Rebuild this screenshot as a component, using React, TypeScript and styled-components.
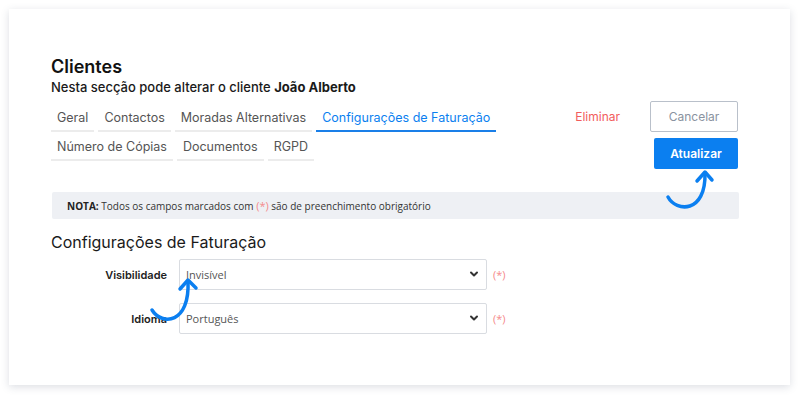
import styled, { createGlobalStyle } from 'styled-components';

const GlobalStyle = createGlobalStyle`
  html, body {
    margin: 0;
    padding: 0;
    background: #ffffff;
  }
  body {
    font-family: Inter, "Noto Sans", sans-serif;
  }
  * { box-sizing: border-box; }
`;

const blue = '#0b7ff0';

type Tab = { label: string; active?: boolean };

const rows: Tab[][] = [
    [{ label: 'Geral' }, { label: 'Contactos' }, { label: 'Moradas Alternativas' }, { label: 'Configurações de Faturação', active: true }],
    [{ label: 'Número de Cópias' }, { label: 'Documentos' }, { label: 'RGPD' }],
];

const fields = [
    { label: 'Visibilidade', value: 'Invisível' },
    { label: 'Idioma', value: 'Português' },
];

export default function App() {
    return (
        <>
            <GlobalStyle />
            <Page>
                <Card>
                    <Title>Clientes</Title>
                    <Subtitle>Nesta secção pode alterar o cliente <b>João Alberto</b></Subtitle>

                    <TopBar>
                        <Tabs>
                            {rows.map((row, i) => (
                                <TabRow key={i}>
                                    {row.map((t) => (
                                        <TabItem key={t.label} active={t.active}>{t.label}</TabItem>
                                    ))}
                                </TabRow>
                            ))}
                        </Tabs>
                        <Actions>
                            <ActionRow>
                                <DeleteLink>Eliminar</DeleteLink>
                                <CancelButton>Cancelar</CancelButton>
                            </ActionRow>
                            <UpdateButton>Atualizar</UpdateButton>
                        </Actions>
                    </TopBar>

                    <Note>
                        <b>NOTA:</b> Todos os campos marcados com <Req>(*)</Req> são de preenchimento obrigatório
                    </Note>

                    <SectionTitle>Configurações de Faturação</SectionTitle>

                    <Form>
                        {fields.map((f) => (
                            <FieldRow key={f.label}>
                                <Label>{f.label}</Label>
                                <SelectWrap>
                                    <Select defaultValue={f.value}>
                                        <option>{f.value}</option>
                                    </Select>
                                    <Chevron viewBox="0 0 10 10">
                                        <path d="M2 3.5 L5 6.5 L8 3.5" />
                                    </Chevron>
                                </SelectWrap>
                                <Req>(*)</Req>
                            </FieldRow>
                        ))}
                    </Form>

                    {/* hint arrows drawn over the card */}
                    <HintArrow left={650} top={155} viewBox="0 0 60 60" width="60" height="60">
                        <path d="M9 33 C 17 48, 47 50, 46 9" />
                        <path d="M38 17 L46 8 L53 16" />
                    </HintArrow>
                    <HintArrow left={134} top={262} viewBox="0 0 60 60" width="60" height="60">
                        <path d="M9 39 C 19 55, 47 53, 45 10" />
                        <path d="M37 18 L45 9 L53 17" />
                    </HintArrow>
                </Card>
            </Page>
        </>
    );
}

const Page = styled.div`
    width: 800px;
    height: 400px;
    padding: 9px 10px 15px 9px;
`;

const Card = styled.div`
    position: relative;
    width: 781px;
    height: 376px;
    background: #fff;
    box-shadow: 0 2px 8px rgba(60, 72, 100, 0.18);
    padding: 48px 52px 0 42px;
    color: #151515;
`;

const Title = styled.h1`
    margin: 0;
    font-size: 18px;
    line-height: 20px;
    font-weight: 600;
    color: #111;
`;

const Subtitle = styled.div`
    margin-top: 2px;
    font-size: 13px;
    line-height: 17px;
    font-weight: 500;
    color: #1a1a1a;
    b { font-weight: 700; }
`;

const TopBar = styled.div`
    display: flex;
    justify-content: space-between;
    margin-top: 7px;
`;

const Tabs = styled.div`
    display: flex;
    flex-direction: column;
`;

const TabRow = styled.div`
    display: flex;
    gap: 4px;
`;

const TabItem = styled.div<{ active?: boolean }>`
    padding: 7px 6px 4px;
    font-size: 12.5px;
    line-height: 16px;
    color: ${(p) => (p.active ? blue : '#555')};
    border-bottom: 2px solid ${(p) => (p.active ? '#1a7fe8' : '#ececec')};
    white-space: nowrap;
`;

const Actions = styled.div`
    display: flex;
    flex-direction: column;
    align-items: flex-end;
    margin-top: -2px;
    gap: 6px;
`;

const ActionRow = styled.div`
    display: flex;
    align-items: center;
    gap: 30px;
`;

const DeleteLink = styled.span`
    font-size: 12px;
    color: #f25c5c;
`;

const CancelButton = styled.button`
    width: 88px;
    height: 31px;
    background: #fff;
    border: 1px solid #b9c0ca;
    border-radius: 2px;
    font-family: inherit;
    font-size: 12px;
    color: #8a93a0;
`;

const UpdateButton = styled.button`
    width: 84px;
    height: 31px;
    background: ${blue};
    border: 0;
    border-radius: 2px;
    font-family: inherit;
    font-size: 12px;
    font-weight: 600;
    color: #fff;
`;

const Note = styled.div`
    margin-top: 23px;
    width: 687px;
    margin-left: 1px;
    height: 27px;
    display: flex;
    align-items: center;
    padding-left: 15px;
    background: #eef0f4;
    border-radius: 2px;
    font-family: "Open Sans", sans-serif;
    font-size: 10px;
    color: #333;
    white-space: pre;
    b { font-weight: 700; color: #222; }
`;

const Req = styled.span`
    font-family: "Open Sans", sans-serif;
    font-size: 11px;
    color: #f58a8a;
`;

const SectionTitle = styled.h2`
    margin: 13px 0 0;
    font-size: 16px;
    line-height: 20px;
    font-weight: 400;
    color: #1a1a1a;
`;

const Form = styled.div`
    display: flex;
    flex-direction: column;
    gap: 13px;
    margin-top: 7px;
`;

const FieldRow = styled.div`
    display: flex;
    align-items: center;
    gap: 6px;
`;

const Label = styled.div`
    width: 122px;
    padding-right: 6px;
    text-align: right;
    font-size: 11px;
    font-weight: 600;
    color: #222;
`;

const SelectWrap = styled.div`
    position: relative;
    width: 308px;
    height: 31px;
`;

const Select = styled.select`
    appearance: none;
    width: 100%;
    height: 100%;
    padding: 0 6px;
    border: 1px solid #d9dce1;
    border-radius: 2px;
    background: #fff;
    font-family: "Open Sans", sans-serif;
    font-size: 11px;
    color: #555;
`;

const Chevron = styled.svg`
    position: absolute;
    right: 8px;
    top: 10px;
    width: 10px;
    height: 10px;
    fill: none;
    stroke: #333;
    stroke-width: 2;
    stroke-linecap: round;
    stroke-linejoin: round;
    pointer-events: none;
`;

const HintArrow = styled.svg<{ left: number; top: number }>`
    position: absolute;
    left: ${(p) => p.left}px;
    top: ${(p) => p.top}px;
    fill: none;
    stroke: ${blue};
    stroke-width: 3.5;
    stroke-linecap: round;
    stroke-linejoin: round;
    pointer-events: none;
`;
